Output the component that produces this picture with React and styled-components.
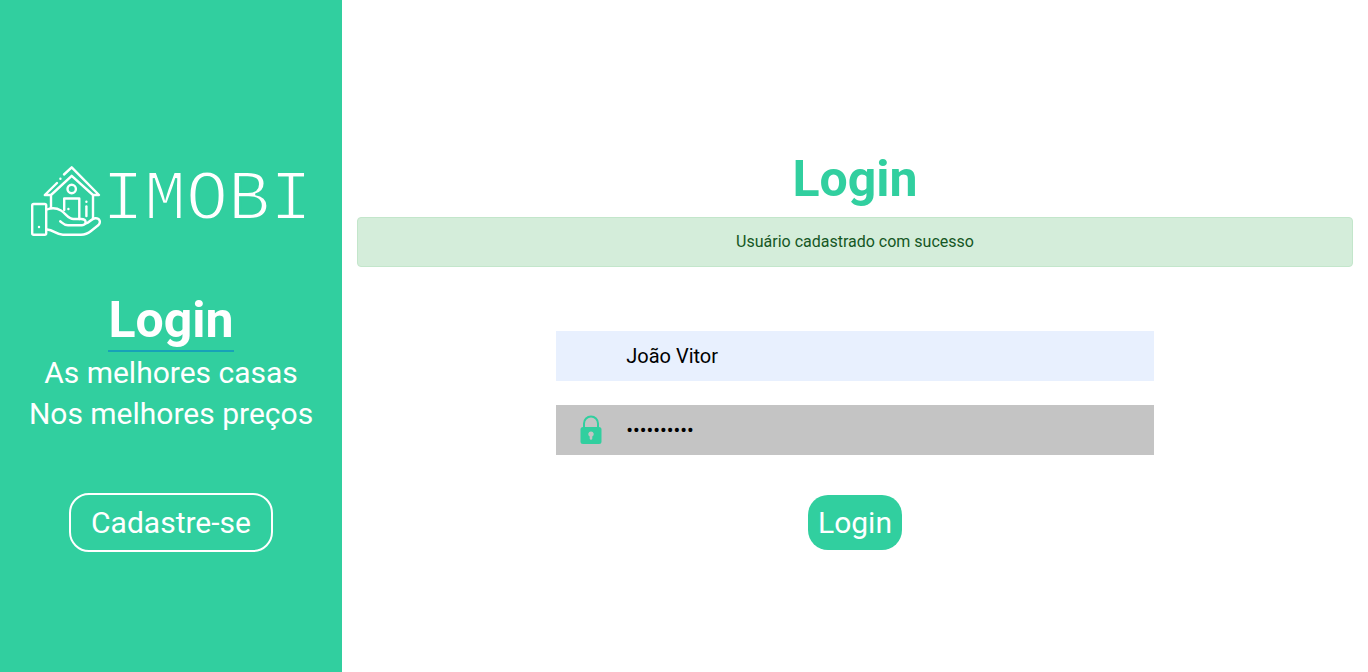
import React from "react";
import styled, { createGlobalStyle } from "styled-components";

const green = "#31cf9f";

const GlobalStyle = createGlobalStyle`
  *, *::before, *::after { box-sizing: border-box; }
  body { margin: 0; background: #fff; font-family: Roboto, sans-serif; font-size: 16px; line-height: 24px; }
  h1, h2, p { margin: 0; }
`;

const Page = styled.div`
  display: grid;
  grid-template-columns: 1fr 3fr;
  min-height: 100vh;
`;

const Sidebar = styled.aside`
  display: flex;
  flex-direction: column;
  align-items: center;
  justify-content: center;
  padding-top: 44px;
  min-width: 0;
  background: ${green};
  color: #fff;
`;

const Brand = styled.div`
  display: flex;
  align-items: center;
  height: 72px;
  margin-bottom: 53px;
`;

const BrandIcon = styled.svg`
  flex: none;
  width: 72px;
  height: 72px;
  fill: none;
  stroke: #fff;
  stroke-width: 2.4;
  stroke-linecap: round;
  stroke-linejoin: round;
`;

const BrandName = styled.span`
  font-family: "Courier New", "Liberation Mono", monospace;
  font-size: 70px;
  line-height: 70px;
  -webkit-text-stroke: 2px ${green};
`;

const Title = styled.h1`
  font-size: 50px;
  font-weight: 700;
  line-height: 60px;
`;

const SideTitle = styled(Title)`
  border-bottom: 2px solid #17a2b8;
`;

const MainTitle = styled(Title)`
  color: ${green};
  margin-bottom: 8px;
`;

const Tagline = styled.p`
  margin-bottom: 59px;
  font-size: 30px;
  line-height: 41px;
  text-align: center;
`;

const Button = styled.button`
  padding: 5px 10px;
  border: 0;
  border-radius: 20px;
  background: ${green};
  color: #fff;
  font-family: inherit;
  font-size: 30px;
  line-height: 45px;
  cursor: pointer;
`;

const OutlineButton = styled(Button)`
  padding: 5px 20px;
  border: 2px solid #fff;
`;

const Main = styled.main`
  display: flex;
  flex-direction: column;
  align-items: center;
  justify-content: center;
  min-width: 0;
  padding: 27px 15px 0;
`;

const Alert = styled.div`
  width: 100%;
  margin-bottom: 64px;
  padding: 12px 20px;
  border: 1px solid #c3e6cb;
  border-radius: 4px;
  background: #d4edda;
  color: #155724;
  text-align: center;
`;

const Form = styled.form`
  display: flex;
  flex-direction: column;
  align-items: center;
  gap: 24px;
  width: 60%;
`;

const Field = styled.div`
  display: flex;
  align-items: center;
  width: 100%;
  height: 50px;
  background: ${(p) => (p.$filled ? "#e8f0fe" : "#c4c4c4")};
`;

const FieldIcon = styled.label`
  display: flex;
  flex: none;
  justify-content: center;
  width: 70px;
`;

const Input = styled.input`
  flex: 1;
  min-width: 0;
  height: 50px;
  padding: 0;
  border: 0;
  outline: 0;
  background: transparent;
  color: #000;
  font-family: inherit;
  font-size: 20px;
`;

const Actions = styled.div`
  padding-top: 16px;
`;

function HouseInHand() {
  return (
    <BrandIcon viewBox="10 10 72 72" aria-hidden="true">
      <path d="M44 19.5 51.7 12.3 79 40H73L51.7 20.8 31 40H24.8L37 28" />
      <path d="M31 41V53M73 41V63" />
      <circle cx="51.7" cy="34" r="4.2" />
      <path d="M44.2 55V43.5H59.3V64" />
      <path d="M66.4 51.5V61" />
      <path d="M40.4 23.8h.01M66.4 46.8h.01M48.4 54h.01M19 72h.01" />
      <rect x="12.2" y="49" width="14" height="30.7" rx="1.5" />
      <path d="M27 54.5C31 53 37 53.2 41 55.5C46 58.5 48 64 53.5 64H61C67 64 67 70.2 62 70.2H48C44 70.2 42.5 68 40.2 66.2" />
      <path d="M65.5 68.5C70 67.5 71 63.8 75 63.3C79.5 62.8 81.2 67 78.5 70L71 76C68 78.5 65 79.7 61 79.7H43C36 79.7 34 75 27 74.5" />
    </BrandIcon>
  );
}

function Padlock() {
  return (
    <svg width="22" height="30" viewBox="0 0 22 30" aria-hidden="true">
      <path d="M4 13V8.5a7 7 0 0 1 14 0V13" fill="none" stroke={green} strokeWidth="2" />
      <path
        fill={green}
        fillRule="evenodd"
        d="M3 12h16a2.5 2.5 0 0 1 2.500 2.500v12a2.500 2.500 0 0 1-2.500 2.500h-16A2.500 2.500 0 0 1 .5 26.500v-12A2.500 2.500 0 0 1 3 12ZM11 16.500a2.700 2.700 0 0 0-1.300 5.100V23.500a1.300 1.300 0 0 0 2.600 0v-1.900A2.700 2.700 0 0 0 11 16.500Z"
      />
    </svg>
  );
}

export default function App() {
  return (
    <>
      <GlobalStyle />
      <Page>
        <Sidebar>
          <Brand>
            <HouseInHand />
            <BrandName>IMOBI</BrandName>
          </Brand>
          <SideTitle as="h2">Login</SideTitle>
          <Tagline>
            As melhores casas
            <br />
            Nos melhores preços
          </Tagline>
          <OutlineButton type="button">Cadastre-se</OutlineButton>
        </Sidebar>
        <Main>
          <MainTitle>Login</MainTitle>
          <Alert role="alert">Usuário cadastrado com sucesso</Alert>
          <Form onSubmit={(e) => e.preventDefault()}>
            <Field $filled>
              <FieldIcon htmlFor="user" aria-label="Usuário" />
              <Input id="user" type="text" defaultValue="João Vitor" />
            </Field>
            <Field>
              <FieldIcon htmlFor="password" aria-label="Senha">
                <Padlock />
              </FieldIcon>
              <Input id="password" type="password" defaultValue="imobi12345" />
            </Field>
            <Actions>
              <Button type="submit">Login</Button>
            </Actions>
          </Form>
        </Main>
      </Page>
    </>
  );
}
